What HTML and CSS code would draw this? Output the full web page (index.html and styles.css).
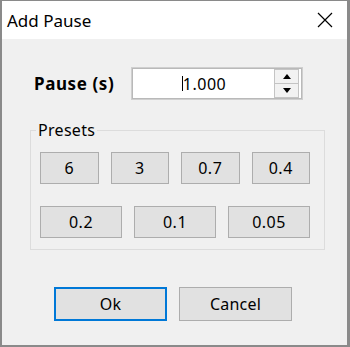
FILE: index.html
```html
<!DOCTYPE html>
<html lang="en">
<head>
    <meta charset="UTF-8">
    <meta name="viewport" content="width=device-width, initial-scale=1.0">
    <title>Add Pause</title>
    <link rel="stylesheet" href="styles.css">
</head>
<body>

    <div class="window">
        <div class="title-bar">
            <span class="title">Add Pause</span>
            <svg class="close" width="16" height="16" viewBox="0 0 16 16">
                <path d="M1 1 L15 15 M15 1 L1 15" stroke="#000" stroke-width="1.2" fill="none"/>
            </svg>
        </div>

        <div class="content">
            <div class="pause-row">
                <span class="pause-label">Pause (s)</span>
                <div class="spin-box">
                    <div class="spin-value"><span class="caret"></span>1.000</div>
                    <div class="spin-buttons">
                        <div class="spin-btn">
                            <svg width="8" height="5" viewBox="0 0 8 5"><path d="M0 5 L4 0 L8 5 Z" fill="#000"/></svg>
                        </div>
                        <div class="spin-btn">
                            <svg width="8" height="5" viewBox="0 0 8 5"><path d="M0 0 L4 5 L8 0 Z" fill="#000"/></svg>
                        </div>
                    </div>
                </div>
            </div>

            <fieldset class="presets">
                <legend>Presets</legend>
                <div class="preset-row four">
                    <button class="btn">6</button>
                    <button class="btn">3</button>
                    <button class="btn">0.7</button>
                    <button class="btn">0.4</button>
                </div>
                <div class="preset-row three">
                    <button class="btn">0.2</button>
                    <button class="btn">0.1</button>
                    <button class="btn">0.05</button>
                </div>
            </fieldset>

            <div class="actions">
                <button class="btn action focused">Ok</button>
                <button class="btn action">Cancel</button>
            </div>
        </div>
    </div>

</body>
</html>
```

FILE: styles.css
```css
body {
    margin: 0;
    padding: 0;
    font-family: "Noto Sans", "Open Sans", sans-serif;
    color: #000;
}

.window {
    width: 350px;
    height: 347px;
    box-sizing: border-box;
    border: 2px solid #8a8a8a;
    border-top: 1px solid #8a8a8a;
    border-right-width: 3px;
    background-color: #f0f0f0;
    display: flex;
    flex-direction: column;
}

.title-bar {
    height: 38px;
    background-color: #fff;
    display: flex;
    align-items: center;
    justify-content: space-between;
    padding: 0 14px 0 5px;
}

.title {
    font-size: 17px;
}

.content {
    flex: 1;
    display: flex;
    flex-direction: column;
}

.pause-row {
    display: flex;
    align-items: center;
    margin-top: 28px;
    padding-left: 32px;
}

.pause-label {
    font-weight: bold;
    font-size: 17px;
    letter-spacing: 0.6px;
    width: 97px;
}

.spin-box {
    width: 172px;
    height: 33px;
    box-sizing: border-box;
    border: 1px solid #cfcfcf;
    box-shadow: inset 0 0 0 1px #b9b9b9;
    background-color: #fff;
    display: flex;
    align-items: center;
    padding: 2px 3px 2px 2px;
}

.spin-value {
    flex: 1;
    text-align: center;
    font-size: 16px;
    letter-spacing: 0.5px;
    display: flex;
    justify-content: center;
    align-items: center;
}

.caret {
    display: inline-block;
    width: 1px;
    height: 15px;
    background-color: #000;
}

.spin-buttons {
    width: 23px;
    height: 27px;
    border: 1px solid #c4c4c4;
    display: flex;
    flex-direction: column;
}

.spin-btn {
    flex: 1;
    display: flex;
    align-items: center;
    justify-content: center;
    background-color: #f2f2f2;
}

.spin-btn + .spin-btn {
    border-top: 1px solid #c4c4c4;
}

.presets {
    margin: 19px 22px 0 28px;
    border: 1px solid #dcdcdc;
    padding: 11px 14px 12px 9px;
    height: 131px;
    box-sizing: border-box;
}

.presets legend {
    font-size: 16px;
    letter-spacing: 0.3px;
    padding: 0 2px;
    margin-left: -4px;
}

.preset-row {
    display: grid;
    gap: 12px;
}

.preset-row.four {
    grid-template-columns: repeat(4, 1fr);
}

.preset-row.three {
    grid-template-columns: repeat(3, 1fr);
    margin-top: 22px;
}

.btn {
    font-family: "Noto Sans", "Open Sans", sans-serif;
    font-size: 16px;
    letter-spacing: 0.5px;
    height: 32px;
    background-color: #e1e1e1;
    border: 1px solid #adadad;
    padding: 0;
    color: #000;
}

.actions {
    display: flex;
    justify-content: center;
    gap: 12px;
    margin-top: 37px;
    padding-right: 3px;
}

.btn.action {
    width: 113px;
    height: 34px;
    letter-spacing: 0.2px;
}

.btn.focused {
    border: 2px solid #0078d7;
}
```
